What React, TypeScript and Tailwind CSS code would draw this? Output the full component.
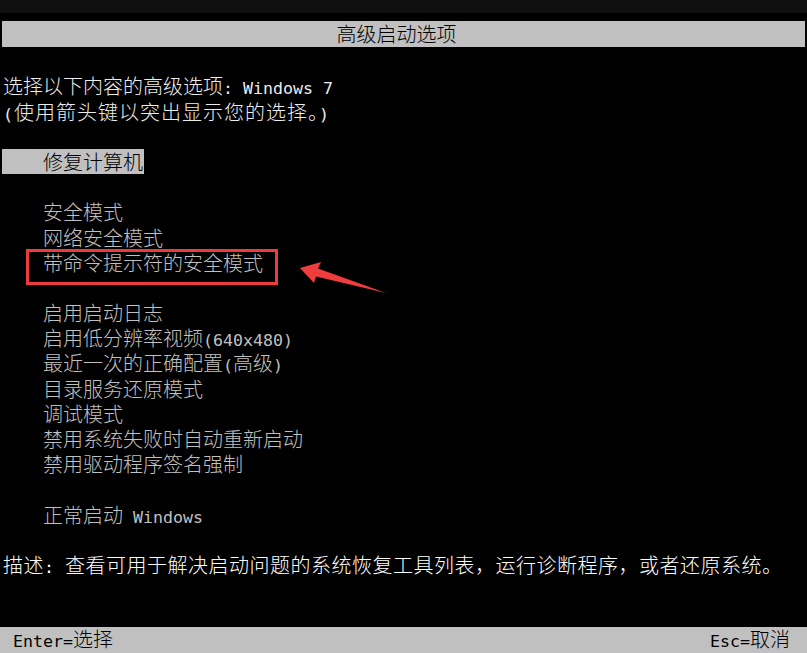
import React from "react";

const CJK = '"Noto Sans CJK SC", "Noto Sans", sans-serif';

function Mixed({ s }: { s: string }) {
  const parts = s.split(/([\x20-\x7e]+)/).filter((p) => p.length > 0);
  return (
    <>
      {parts.map((p, i) =>
        /^[\x20-\x7e]+$/.test(p) ? (
          <span
            key={i}
            className="text-[16.6px] font-normal whitespace-pre"
            style={{ fontFamily: '"DejaVu Sans Mono", monospace' }}
          >
            {p}
          </span>
        ) : (
          <span key={i}>{p}</span>
        )
      )}
    </>
  );
}

function Line({
  s,
  indent = false,
  cls = "text-[#c0c0c0]",
}: {
  s?: string;
  indent?: boolean;
  cls?: string;
}) {
  return (
    <div className={`h-[25.2px] leading-[25.2px] whitespace-nowrap ${indent ? "pl-[43px]" : "pl-[3px]"} ${cls}`}>
      {s ? <Mixed s={s} /> : null}
    </div>
  );
}

export default function App() {
  return (
    <div
      className="relative w-[807px] h-[653px] bg-black flex flex-col overflow-hidden text-[20px] font-light"
      style={{ fontFamily: CJK }}
    >
      <div className="h-[13px] bg-[#101010]" />
      <div className="h-[8px]" />
      <div className="h-[26px] mx-[2px] bg-[#c0c0c0] flex items-center justify-center pr-[14px] text-black leading-none">
        高级启动选项
      </div>

      <div className="pt-[26.4px] flex flex-col">
        <Line s="选择以下内容的高级选项: Windows 7" cls="text-[#ececec]" />
        <Line s="(使用箭头键以突出显示您的选择。)" cls="text-[#ececec] tracking-[1px]" />
        <Line />
        <div className="h-[25.2px] leading-[25.2px] whitespace-nowrap">
          <span className="inline-block ml-[2px] pl-[41px] pr-[1px] bg-[#c0c0c0] text-black">
            修复计算机
          </span>
        </div>
        <Line />
        <Line s="安全模式" indent />
        <Line s="网络安全模式" indent />
        <div className="relative">
          <Line s="带命令提示符的安全模式" indent />
          <div className="absolute left-[26px] top-[-1px] w-[252px] h-[36px] border-[3px] border-[#ec3b3b]" />
        </div>
        <Line />
        <Line s="启用启动日志" indent />
        <Line s="启用低分辨率视频(640x480)" indent />
        <Line s="最近一次的正确配置(高级)" indent />
        <Line s="目录服务还原模式" indent />
        <Line s="调试模式" indent />
        <Line s="禁用系统失败时自动重新启动" indent />
        <Line s="禁用驱动程序签名强制" indent />
        <Line />
        <Line s="正常启动 Windows" indent />
        <Line />
        <Line
          s="描述: 查看可用于解决启动问题的系统恢复工具列表，运行诊断程序，或者还原系统。"
          cls="text-white tracking-[0.5px]"
        />
      </div>

      <div className="mt-auto h-[26px] bg-[#c0c0c0] flex items-center justify-between pl-[13px] pr-[17px] text-black leading-none">
        <span>
          <Mixed s="Enter=选择" />
        </span>
        <span>
          <Mixed s="Esc=取消" />
        </span>
      </div>

      <svg
        className="absolute left-0 top-0 pointer-events-none"
        width="807"
        height="653"
        viewBox="0 0 807 653"
      >
        <polygon
          points="300,268 321,262 318,268.5 386,293 316,276.5 314,283"
          fill="#ef3d3d"
        />
      </svg>
    </div>
  );
}
